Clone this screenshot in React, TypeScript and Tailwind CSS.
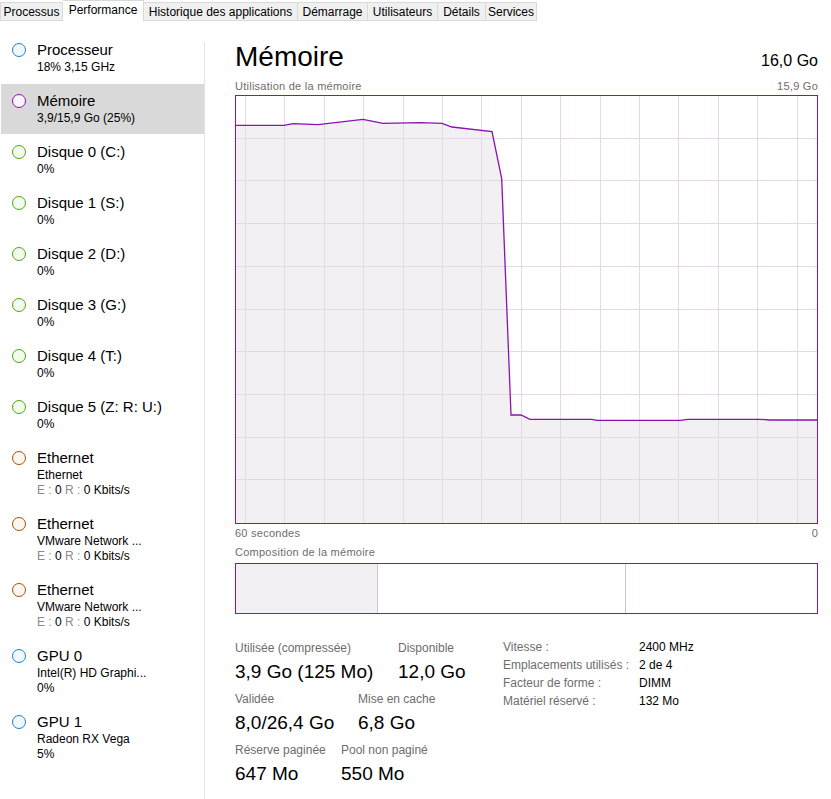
import React from "react";

const TABS = [
  { label: "Processus", w: "w-[63px]" },
  { label: "Performance", w: "w-[81px]", active: true },
  { label: "Historique des applications", w: "w-[154px]" },
  { label: "Démarrage", w: "w-[70px]" },
  { label: "Utilisateurs", w: "w-[70px]" },
  { label: "Détails", w: "w-[48px]" },
  { label: "Services", w: "w-[51px]" },
];

type Item = {
  title: string;
  lines: React.ReactNode[];
  ring: string;
  selected?: boolean;
};

const blue = "border-[#1b84c8] bg-[#f1f7fc]";
const green = "border-[#4da60c] bg-[#f3faee]";
const orange = "border-[#a74f01] bg-[#fcf6f0]";
const purple = "border-[#8b12ae] bg-[#faf4fb]";

const rate = (
  <span>
    <span className="text-[#8a8a8a]">E : </span>0 <span className="text-[#8a8a8a]">R : </span>0 Kbits/s
  </span>
);

const ITEMS: Item[] = [
  { title: "Processeur", lines: ["18%  3,15 GHz"], ring: blue },
  { title: "Mémoire", lines: ["3,9/15,9 Go (25%)"], ring: purple, selected: true },
  { title: "Disque 0 (C:)", lines: ["0%"], ring: green },
  { title: "Disque 1 (S:)", lines: ["0%"], ring: green },
  { title: "Disque 2 (D:)", lines: ["0%"], ring: green },
  { title: "Disque 3 (G:)", lines: ["0%"], ring: green },
  { title: "Disque 4 (T:)", lines: ["0%"], ring: green },
  { title: "Disque 5 (Z: R: U:)", lines: ["0%"], ring: green },
  { title: "Ethernet", lines: ["Ethernet", rate], ring: orange },
  { title: "Ethernet", lines: ["VMware Network ...", rate], ring: orange },
  { title: "Ethernet", lines: ["VMware Network ...", rate], ring: orange },
  { title: "GPU 0", lines: ["Intel(R) HD Graphi...", "0%"], ring: blue },
  { title: "GPU 1", lines: ["Radeon RX Vega", "5%"], ring: blue },
];

// memory usage samples, in px inside the 581x427 plot
const POINTS: [number, number][] = [
  [0, 29.3], [48, 29.3], [57, 27.7], [82, 28.7], [127, 23.3], [147, 27.3],
  [184, 26.7], [206, 27.3], [216, 31], [256, 35.7], [265.7, 82.7], [275, 319],
  [285, 319], [294, 323.3], [356, 323.3], [361, 324.3], [444, 324.3],
  [452, 323.3], [524, 323.3], [534, 324], [581, 324],
];

function SideItem({ item }: { item: Item }) {
  const tall = item.lines.length > 1;
  return (
    <div className={tall ? "h-[66px]" : "h-[51px]"}>
      <div
        className={`ml-[1px] w-[203px] pt-[8px] ${tall ? "h-[65px]" : "h-[50px]"} ${
          item.selected ? "bg-[#d9d9d9]" : ""
        }`}
      >
        <div className="flex items-center h-[18px]">
          <span className={`ml-[11px] w-[14px] h-[14px] rounded-full border-[1.5px] ${item.ring}`} />
          <span className="ml-[11px] text-[15px] leading-[18px] text-black whitespace-nowrap">
            {item.title}
          </span>
        </div>
        <div className="mt-[1px] pl-[36px] text-[12px] leading-[15px] text-black whitespace-nowrap">
          {item.lines.map((l, i) => (
            <div key={i}>{l}</div>
          ))}
        </div>
      </div>
    </div>
  );
}

function Chart() {
  const W = 581;
  const H = 427;
  const line = POINTS.map((p) => p.join(",")).join(" ");
  const fill = `${line} ${W},${H} 0,${H}`;
  const vlines = Array.from({ length: 15 }, (_, k) => Math.round(9 + 39.4 * k) + 0.5);
  const hlines = Array.from({ length: 9 }, (_, k) => Math.round(42.7 * (k + 1)) - 0.5);
  return (
    <div className="w-[583px] h-[429px] border border-[#8b12ae] bg-white">
      <svg width={W} height={H} className="block">
        <polygon points={fill} fill="#f3f0f4" />
        <g stroke="#e7d7ec" strokeWidth="1" shapeRendering="crispEdges">
          {vlines.map((x) => (
            <line key={"v" + x} x1={x} y1={0} x2={x} y2={H} />
          ))}
          {hlines.map((y) => (
            <line key={"h" + y} x1={0} y1={y} x2={W} y2={y} />
          ))}
        </g>
        <polyline points={line} fill="none" stroke="#8b12ae" strokeWidth="1.3" />
      </svg>
    </div>
  );
}

function Stat({ label, value, w }: { label: string; value: string; w?: string }) {
  return (
    <div className={`flex flex-col whitespace-nowrap ${w ?? ""}`}>
      <span className="text-[12px] leading-[15px] text-[#6d6d6d]">{label}</span>
      <span className="mt-[4px] text-[19px] leading-[24px] text-black">{value}</span>
    </div>
  );
}

export default function App() {
  return (
    <div className="w-[831px] h-[799px] overflow-hidden bg-white font-['Liberation_Sans',Arial,sans-serif] text-black">
      {/* tabs */}
      <div className="flex items-end h-[21px]">
        {TABS.map((t, i) => (
          <div
            key={t.label}
            className={`${t.w} flex items-center justify-center text-[12px] whitespace-nowrap border-t border-r border-[#d9d9d9] ${
              i === 0 ? "border-l" : ""
            } ${t.active ? "h-[21px] bg-white pb-[3px]" : "h-[19px] bg-[#f0f0f0] border-b"}`}
          >
            {t.label}
          </div>
        ))}
      </div>

      <div className="flex h-[778px]">
        {/* sidebar */}
        <div className="w-[204px] pt-[12px]">
          {ITEMS.map((it, i) => (
            <SideItem key={i} item={it} />
          ))}
        </div>
        <div className="w-px mt-[21px] bg-[#e3e3e3]" />

        {/* main */}
        <div className="flex-1 pl-[30px] pr-[13px] pt-[18px]">
          <div className="flex items-baseline justify-between w-[583px]">
            <span className="text-[28px] leading-[35px]">Mémoire</span>
            <span className="text-[16px] leading-[20px]">16,0 Go</span>
          </div>
          <div className="mt-[5px] flex justify-between w-[583px] text-[11px] leading-[14px] tracking-[0.25px] text-[#6d6d6d]">
            <span>Utilisation de la mémoire</span>
            <span>15,9 Go</span>
          </div>
          <div className="mt-[2px]">
            <Chart />
          </div>
          <div className="mt-[2px] flex justify-between w-[583px] text-[11px] leading-[14px] tracking-[0.25px] text-[#6d6d6d]">
            <span>60 secondes</span>
            <span>0</span>
          </div>
          <div className="mt-[5px] text-[11px] leading-[14px] tracking-[0.25px] text-[#6d6d6d]">
            Composition de la mémoire
          </div>
          <div className="mt-[4px] w-[583px] h-[51px] border border-[#8b12ae] flex">
            <div className="w-[142px] bg-[#f3f0f4] border-r border-[#d6bfdd]" />
            <div className="w-[248px] border-r border-[#d6bfdd]" />
            <div className="flex-1" />
          </div>

          <div className="mt-[24px] flex">
            <div className="w-[268px] pt-[3px] flex flex-col gap-[8px]">
              <div className="flex">
                <Stat w="w-[163px]" label="Utilisée (compressée)" value="3,9 Go (125 Mo)" />
                <Stat label="Disponible" value="12,0 Go" />
              </div>
              <div className="flex">
                <Stat w="w-[123px]" label="Validée" value="8,0/26,4 Go" />
                <Stat label="Mise en cache" value="6,8 Go" />
              </div>
              <div className="flex">
                <Stat w="w-[106px]" label="Réserve paginée" value="647 Mo" />
                <Stat label="Pool non paginé" value="550 Mo" />
              </div>
            </div>
            <div className="text-[12px] leading-[18px]">
              {[
                ["Vitesse :", "2400 MHz"],
                ["Emplacements utilisés :", "2 de 4"],
                ["Facteur de forme :", "DIMM"],
                ["Matériel réservé :", "132 Mo"],
              ].map(([k, v]) => (
                <div key={k} className="flex whitespace-nowrap">
                  <span className="w-[136px] text-[#6d6d6d]">{k}</span>
                  <span className="text-black">{v}</span>
                </div>
              ))}
            </div>
          </div>
        </div>
      </div>
    </div>
  );
}
